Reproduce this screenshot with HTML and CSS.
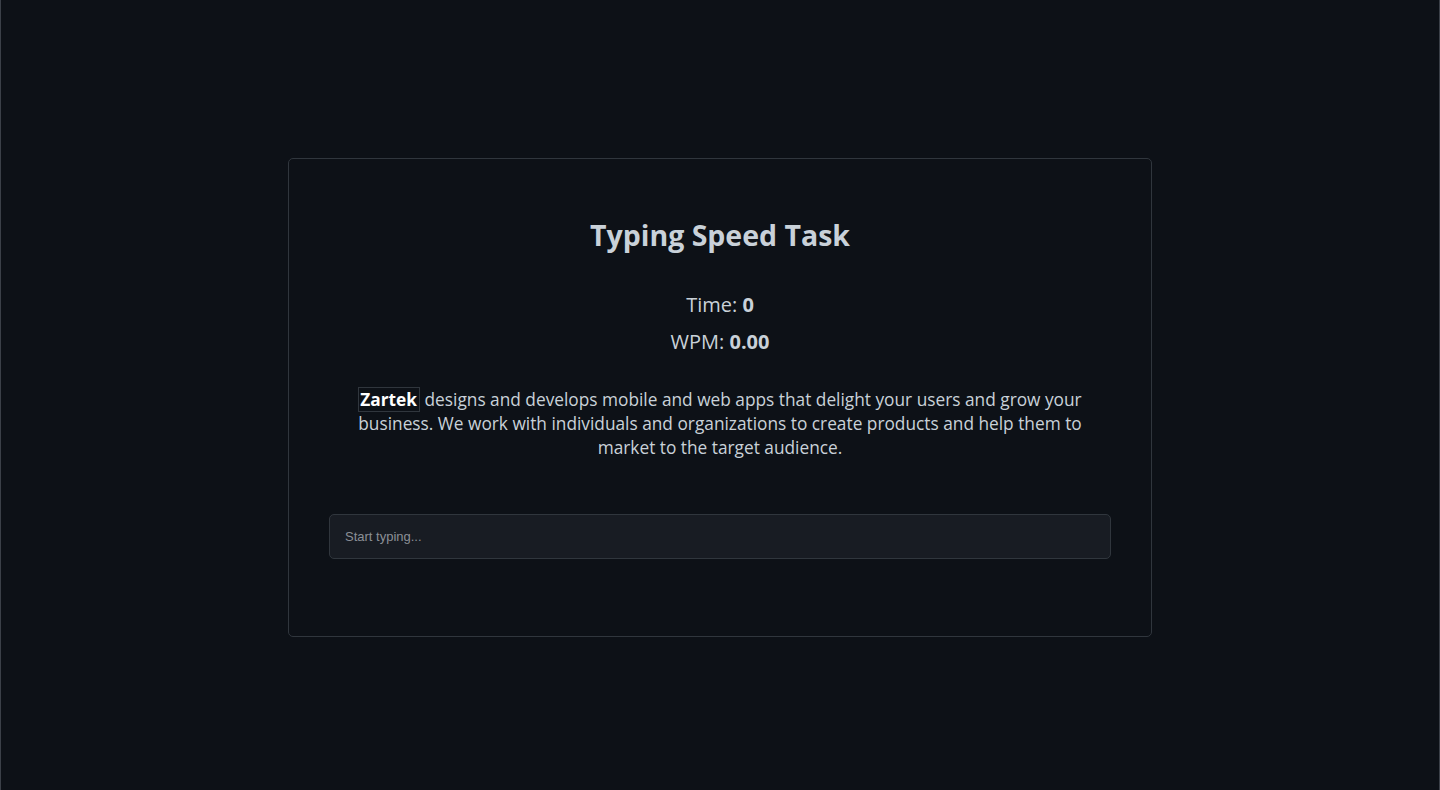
FILE: index.html
```html
<!DOCTYPE html>
<html lang="en">
<head>
<meta charset="utf-8">
<title>Typing Speed Task</title>
<link rel="stylesheet" href="styles.css">
</head>
<body>
<div class="page">
  <main class="card">
    <h1 class="title">Typing Speed Task</h1>
    <div class="stats">
      <p class="stat">Time: <strong>0</strong></p>
      <p class="stat">WPM: <strong>0.00</strong></p>
    </div>
    <p class="passage"><span class="current">Zartek</span> designs and develops mobile and web apps that delight your users and grow your business. We work with individuals and organizations to create products and help them to market to the target audience.</p>
    <input class="typing-input" type="text" placeholder="Start typing...">
  </main>
</div>
</body>
</html>
```
FILE: styles.css
```css
* { box-sizing: border-box; }
html, body { margin: 0; padding: 0; }
body {
  background: #0d1117;
  color: #c9d1d9;
  font-family: "Open Sans", "Noto Sans", sans-serif;
}
.page {
  height: 790px;
  border-left: 1px solid #3b4048;
  border-right: 1px solid #3b4048;
  display: flex;
  align-items: center;
  justify-content: center;
}
.card {
  width: 864px;
  height: 479px;
  border: 1px solid #30363d;
  border-radius: 5px;
  padding: 56px 40px 0;
  display: flex;
  flex-direction: column;
  align-items: center;
  margin-top: 5px;
}
.title {
  margin: 0;
  font-size: 28.5px;
  font-weight: 700;
  line-height: 40px;
  color: #c9d1d9;
}
.stats {
  margin-top: 36px;
  display: flex;
  flex-direction: column;
  align-items: center;
  gap: 9px;
}
.stat {
  margin: 0;
  font-size: 20px;
  line-height: 28px;
}
.stat strong { font-weight: 700; }
.passage {
  margin: 32px 0 0;
  max-width: 745px;
  text-align: center;
  font-size: 17.3px;
  line-height: 24px;
}
.current {
  color: #ffffff;
  font-weight: 700;
  border: 1px solid #30363d;
  padding: 0 2px 0 1px;
}
.typing-input {
  margin-top: 54px;
  width: 100%;
  height: 45px;
  background: #181c23;
  border: 1px solid #30363d;
  border-radius: 5px;
  padding: 0 15px;
  color: #c9d1d9;
  font-family: "Liberation Sans", Arial, sans-serif;
  font-size: 13px;
  outline: none;
}
.typing-input::placeholder { color: #8b8f96; }
```
